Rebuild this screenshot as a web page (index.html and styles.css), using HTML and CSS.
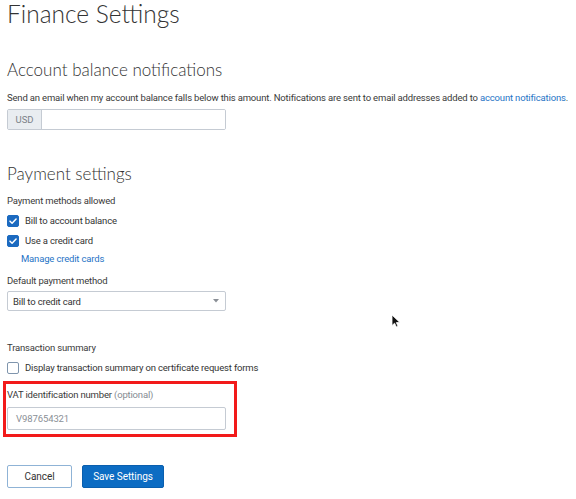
FILE: index.html
```html
<!DOCTYPE html>
<html>
<head>
<meta charset="utf-8">
<link rel="stylesheet" href="styles.css">
</head>
<body>
<main class="page">
  <h1 class="title">Finance Settings</h1>

  <h2 class="section-title first">Account balance notifications</h2>
  <p class="desc">Send an email when my account balance falls below this amount. Notifications are sent to email addresses added to <a class="link" href="#">account notifications</a>.</p>
  <div class="input-group">
    <span class="addon">USD</span>
    <span class="input-field"></span>
  </div>

  <h2 class="section-title second">Payment settings</h2>
  <div class="label methods-label">Payment methods allowed</div>
  <div class="check-row row1">
    <span class="checkbox checked"><svg viewBox="0 0 12 12" width="12" height="12"><path d="M2.4 6.2 L4.9 8.6 L9.7 3.6" fill="none" stroke="#fff" stroke-width="1.8" stroke-linecap="round" stroke-linejoin="round"/></svg></span>
    <span class="check-label">Bill to account balance</span>
  </div>
  <div class="check-row row2">
    <span class="checkbox checked"><svg viewBox="0 0 12 12" width="12" height="12"><path d="M2.4 6.2 L4.9 8.6 L9.7 3.6" fill="none" stroke="#fff" stroke-width="1.8" stroke-linecap="round" stroke-linejoin="round"/></svg></span>
    <span class="check-label">Use a credit card</span>
  </div>
  <a class="link manage" href="#">Manage credit cards</a>

  <div class="label default-label">Default payment method</div>
  <div class="select">
    <span class="select-text">Bill to credit card</span>
    <svg class="caret" viewBox="0 0 6 4" width="6" height="4"><path d="M0 0 L6 0 L3 3.5 Z" fill="#8a8f96"/></svg>
  </div>

  <div class="label summary-label">Transaction summary</div>
  <div class="check-row row3">
    <span class="checkbox"></span>
    <span class="check-label">Display transaction summary on certificate request forms</span>
  </div>

  <div class="vat-group">
    <div class="label vat-label">VAT identification number <span class="optional">(optional)</span></div>
    <div class="vat-input">V987654321</div>
  </div>

  <div class="actions">
    <button class="btn btn-cancel">Cancel</button>
    <button class="btn btn-save">Save Settings</button>
  </div>
</main>
<svg class="cursor" viewBox="0 0 10 14" width="10" height="14"><path d="M1 1 L1 11.5 L3.6 9.2 L5.4 13 L7 12.2 L5.3 8.6 L8.8 8.4 Z" fill="#111" stroke="#fff" stroke-width="0.8"/></svg>
</body>
</html>
```

FILE: styles.css
```css
html, body {
  margin: 0;
  padding: 0;
  background: #ffffff;
}

body {
  font-family: Roboto, "Liberation Sans", Arial, sans-serif;
  color: #3a3a3a;
  position: relative;
  width: 576px;
  height: 499px;
  overflow: hidden;
}

.page {
  padding: 0 7px;
}

.title {
  margin: 0;
  font-family: Lato, "Noto Sans", sans-serif;
  font-weight: 300;
  font-size: 24.5px;
  line-height: 28px;
  color: #333;
}

.section-title {
  margin: 0;
  font-family: Lato, "Noto Sans", sans-serif;
  font-weight: 300;
  font-size: 17px;
  line-height: 22px;
  color: #333;
}

.section-title.first { margin-top: 31px; }
.section-title.second { margin-top: 33px; }

.desc {
  margin: 11px 0 0;
  font-size: 9.5px;
  letter-spacing: -0.17px;
  line-height: 12px;
  white-space: nowrap;
  color: #3a3a3a;
}

.link {
  color: #1f74c6;
  text-decoration: none;
}

.input-group {
  margin-top: 5px;
  display: flex;
  width: 219px;
  height: 21px;
  box-sizing: border-box;
  border: 1px solid #c5cbd3;
  border-radius: 2px;
  overflow: hidden;
}

.addon {
  width: 33px;
  background: #e9edf1;
  border-right: 1px solid #c5cbd3;
  font-size: 9.5px;
  color: #7b8188;
  display: flex;
  align-items: center;
  justify-content: center;
}

.input-field {
  flex: 1;
  background: #fff;
}

.label {
  font-size: 9.5px;
  letter-spacing: -0.17px;
  line-height: 12px;
  color: #3a3a3a;
}

.methods-label { margin-top: 10px; }

.check-row {
  display: flex;
  align-items: center;
  height: 14px;
  gap: 6px;
}

.row1 { margin-top: 7px; }
.row2 { margin-top: 6px; }
.row3 { margin-top: 7px; }

.checkbox {
  width: 12px;
  height: 12px;
  box-sizing: border-box;
  border: 1px solid #7f95ad;
  border-radius: 2px;
  display: flex;
  align-items: center;
  justify-content: center;
  background: #fff;
}

.checkbox.checked {
  background: #1b6ac0;
  border-color: #1b6ac0;
}

.checkbox svg { display: block; }

.check-label {
  font-size: 9.5px;
  letter-spacing: -0.17px;
  line-height: 14px;
  color: #333;
}

.manage {
  display: block;
  margin-top: 5px;
  margin-left: 14px;
  font-size: 9.5px;
  letter-spacing: -0.17px;
  line-height: 12px;
}

.default-label { margin-top: 10px; }

.select {
  margin-top: 4px;
  width: 219px;
  height: 20px;
  box-sizing: border-box;
  border: 1px solid #c5cbd3;
  border-radius: 2px;
  display: flex;
  align-items: center;
  justify-content: space-between;
  padding: 0 6px 0 5px;
  background: #fff;
}

.select-text {
  font-size: 9.5px;
  letter-spacing: -0.17px;
  color: #333;
}

.caret { display: block; }

.summary-label { margin-top: 31px; }

.vat-group {
  margin-top: 6px;
  margin-left: -4px;
  width: 234px;
  box-sizing: border-box;
  border: 3px solid #f21a1a;
  padding: 5px 8px 4px 1px;
}

.optional { color: #858b92; }

.vat-input {
  margin-top: 6px;
  height: 23px;
  box-sizing: border-box;
  border: 1px solid #c5cbd3;
  border-radius: 2px;
  padding-left: 8px;
  display: flex;
  align-items: center;
  font-size: 9.5px;
  letter-spacing: -0.1px;
  color: #8a8f96;
}

.actions {
  margin-top: 28px;
  display: flex;
  gap: 10px;
}

.btn {
  height: 23px;
  box-sizing: border-box;
  border-radius: 2px;
  font-family: Roboto, "Liberation Sans", Arial, sans-serif;
  font-size: 10px;
  letter-spacing: -0.05px;
  padding: 0;
  cursor: pointer;
}

.btn-cancel {
  width: 65px;
  background: #fff;
  border: 1px solid #8fb3d6;
  color: #333;
}

.btn-save {
  width: 82px;
  background: #0c6cc3;
  border: 1px solid #0a5fae;
  color: #fff;
}

.cursor {
  position: absolute;
  left: 391px;
  top: 314px;
}
```
